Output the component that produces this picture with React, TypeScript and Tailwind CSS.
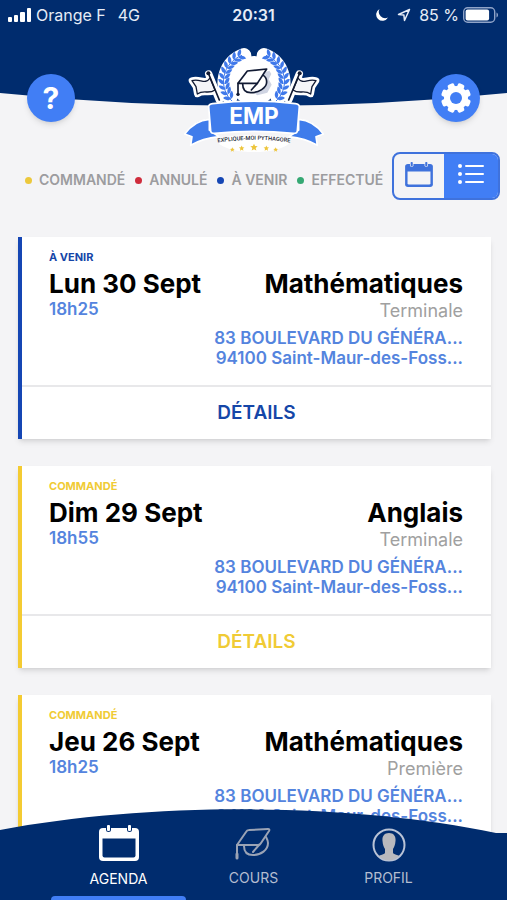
import React from "react";

type Status = "venir" | "commande";

const statusStyle: Record<Status, { label: string; border: string; text: string }> = {
  venir: { label: "À VENIR", border: "border-[#1546b4]", text: "text-[#1546a8]" },
  commande: { label: "COMMANDÉ", border: "border-[#f4cb32]", text: "text-[#f0cb35]" },
};

const lessons: { status: Status; date: string; time: string; subject: string; level: string }[] = [
  { status: "venir", date: "Lun 30 Sept", time: "18h25", subject: "Mathématiques", level: "Terminale" },
  { status: "commande", date: "Dim 29 Sept", time: "18h55", subject: "Anglais", level: "Terminale" },
  { status: "commande", date: "Jeu 26 Sept", time: "18h25", subject: "Mathématiques", level: "Première" },
];

const legend = [
  { label: "COMMANDÉ", dot: "bg-[#ecc83c]" },
  { label: "ANNULÉ", dot: "bg-[#cf2c3c]" },
  { label: "À VENIR", dot: "bg-[#1546b4]" },
  { label: "EFFECTUÉ", dot: "bg-[#35a873]" },
];

function StatusBar() {
  return (
    <div className="flex h-[30px] items-center justify-between px-2 text-base text-[#e6ecf7]">
      <div className="flex flex-1 items-center gap-1">
        <svg width="24" height="14" viewBox="0 0 24 14" fill="#fff" aria-hidden="true">
          <rect x="0" y="9" width="4" height="5" rx="1" />
          <rect x="6" y="7" width="4" height="7" rx="1" />
          <rect x="12" y="4" width="5" height="10" rx="1" />
          <rect x="19" y="0" width="4" height="14" rx="1" />
        </svg>
        <span>Orange F</span>
        <span className="ml-2">4G</span>
      </div>
      <span className="font-semibold">20:31</span>
      <div className="flex flex-1 items-center justify-end gap-1">
        <svg width="14" height="14" viewBox="0 0 14 14" fill="#fff" aria-hidden="true">
          <path d="M4.5 1A6.3 6.3 0 1 0 13 9.6 6.4 6.4 0 0 1 4.5 1Z" />
        </svg>
        <svg className="ml-1" width="14" height="14" viewBox="0 0 14 14" fill="none" stroke="#e6ecf7" strokeWidth="1.5" strokeLinejoin="round" aria-hidden="true">
          <path d="M12.5 1.5 1.5 6.5l5.4.6.6 5.4Z" />
        </svg>
        <span className="ml-1">85 %</span>
        <svg width="36" height="16" viewBox="0 0 36 16" aria-hidden="true">
          <rect x="0.7" y="0.7" width="31" height="14.6" rx="4" fill="none" stroke="#8fa3c8" strokeWidth="1.4" />
          <rect x="2.6" y="2.6" width="23.5" height="10.8" rx="2" fill="#fff" />
          <path d="M33.5 5.5c2 .8 2 4.2 0 5Z" fill="#8fa3c8" />
        </svg>
      </div>
    </div>
  );
}

const leafAngles = [140, 151, 162, 173, 184, 195, 206, 217, 228, 239];

function Branch() {
  return (
    <g>
      <path d="M168 174A90 86 0 0 1 210 46" fill="none" stroke="#fff" strokeWidth="44" strokeLinecap="round" />
      <path d="M177 186A88 84 0 0 1 204 46" fill="none" stroke="#3f78ea" strokeWidth="3" />
      {leafAngles.map((angle) => {
        const rad = (angle * Math.PI) / 180;
        const x = 238 + 87 * Math.cos(rad);
        const y = 122 + 84 * Math.sin(rad);
        return (
          <g key={angle} transform={`translate(${x} ${y}) rotate(${angle + 90})`} fill="#3f78ea">
            <path d="M0 0C-1-10 7-16 17-17 17-9 12-1 0 0Z" />
            <path d="M0 0C-1 10 7 16 17 17 17 9 12 1 0 0Z" />
          </g>
        );
      })}
    </g>
  );
}

function Flag() {
  const cloth = "M108 114C94 136 78 114 54 122L66 140 70 162C90 148 104 164 123 150Z";
  const pole = "M104 102 136 180";
  return (
    <g strokeLinecap="round" strokeLinejoin="round">
      <path d={cloth} fill="#fff" stroke="#fff" strokeWidth="20" />
      <path d={pole} fill="none" stroke="#fff" strokeWidth="22" />
      <path d={cloth} fill="#f4f5f8" stroke="#111a33" strokeWidth="4" />
      <path d={pole} fill="none" stroke="#111a33" strokeWidth="5" />
      <circle cx="103" cy="100" r="6" fill="#111a33" />
    </g>
  );
}

const star = "M0-11 3.2-4 11-3.4 5 1.8 7 9.5 0 5.4-7 9.5-5 1.8-11-3.4-3.2-4Z";

function Logo() {
  return (
    <svg width="144" height="108" viewBox="24 12 432 324" role="img" aria-label="Explique-moi Pythagore">
      <circle cx="240" cy="122" r="74" fill="#fff" />
      <Branch />
      <g transform="translate(480 0) scale(-1 1)">
        <Branch />
      </g>
      <Flag />
      <g transform="translate(480 0) scale(-1 1)">
        <Flag />
      </g>
      <path d="M262 100 286 92 292 102 284 118 293 134 280 158 250 166 236 156Z" fill="#cfd4e2" />
      <g fill="none" stroke="#111a33" strokeWidth="5" strokeLinejoin="round" strokeLinecap="round">
        <path d="M206 132C206 150 216 158 230 158 254 158 278 144 278 126 278 116 274 110 268 106" fill="#fff" />
        <path d="M192 130 220 93 278 87 250 130Z" fill="#fff" />
        <path d="M192 130V164M250 130 232 150" />
      </g>
      <circle cx="192" cy="163" r="5" fill="#111a33" />
      <g fill="#3f7ceb" stroke="#fff" strokeWidth="5" strokeLinejoin="round">
        <path d="M106 238C76 240 54 252 32 282L54 290 50 316C74 302 96 294 134 290L106 270Z" />
        <path d="M374 238C404 240 426 252 448 282L426 290 430 316C406 302 384 294 346 290L374 270Z" />
        <path d="M104 200C104 194 110 192 116 191 200 181 280 181 364 191 370 192 376 194 376 200L370 272C370 278 364 280 358 280 280 272 200 272 122 280 116 280 110 278 110 272Z" />
      </g>
      <text x="240" y="252" textAnchor="middle" fontSize="68" className="font-['Inter',sans-serif] font-bold" fill="#fff">EMP</text>
      <path id="motto" d="M110 311Q240 288 370 311" fill="none" />
      <path d="M134 294Q240 276 346 294L344 312Q310 336 240 336T136 312Z" fill="#fff" />
      <text fontSize="17" textAnchor="middle" className="font-['Roboto',sans-serif] font-medium" fill="#202635">
        <textPath href="#motto" startOffset="50%">EXPLIQUE-MOI PYTHAGORE</textPath>
      </text>
      <g fill="#edc53c">
        <path d={star} transform="translate(240 322)" />
        <path d={star} transform="translate(203 325) scale(.75)" />
        <path d={star} transform="translate(277 325) scale(.75)" />
        <path d={star} transform="translate(175 329) scale(.65)" />
        <path d={star} transform="translate(305 329) scale(.65)" />
      </g>
    </svg>
  );
}

function Gear() {
  return (
    <svg width="32" height="32" viewBox="-16 -16 32 32" aria-hidden="true">
      <g fill="#fff">
        <circle r="12" />
        {[22.5, 67.5, 112.5, 157.5].map((a) => (
          <rect key={a} x="-3.5" y="-15" width="7" height="30" rx="2" transform={`rotate(${a})`} />
        ))}
      </g>
      <circle r="6" fill="#417ef5" />
    </svg>
  );
}

function CalendarIcon({ className, hole }: { className: string; hole: string }) {
  return (
    <svg className={className} viewBox="0 0 40 36" aria-hidden="true">
      <rect x="0" y="3" width="40" height="33" rx="4" fill="currentColor" />
      <path d="M3.5 13.5h33v17a2 2 0 0 1-2 2h-29a2 2 0 0 1-2-2Z" fill={hole} />
      <rect x="7" y="-1" width="5" height="8" rx="2.5" fill={hole} />
      <rect x="28" y="-1" width="5" height="8" rx="2.5" fill={hole} />
      <rect x="8" y="0" width="3" height="6" rx="1" fill="currentColor" />
      <rect x="29" y="0" width="3" height="6" rx="1" fill="currentColor" />
    </svg>
  );
}

function CapIcon() {
  return (
    <svg width="38" height="32" viewBox="0 0 38 32" fill="none" stroke="currentColor" strokeWidth="2" strokeLinejoin="round" strokeLinecap="round" aria-hidden="true">
      <path d="M2 17 11 4Q12 2 14 2L33 1Q35 1 34 3L26 15Q25 17 23 17Z" />
      <path d="M2 17v12M9 18c0 6 3 9 9 9 8 0 15-5 15-12 0-3-1-4-2-6M24 17l-6 7" />
      <path d="M2 26v4" strokeWidth="3" />
    </svg>
  );
}

function ProfileIcon() {
  return (
    <svg width="34" height="34" viewBox="0 0 34 34" aria-hidden="true">
      <circle cx="17" cy="17" r="15.5" fill="none" stroke="#b9c3d6" strokeWidth="2" />
      <path d="M17 5c-5 0-7 3.5-6.5 8 .3 4 1.3 6 2.5 8v3.5c0 1-.5 1.3-2.5 2-2 .6-3 1-4 1.5a15 15 0 0 0 21 0c-1-.5-2-.9-4-1.5-2-.7-2.5-1-2.5-2V21c1.2-2 2.2-4 2.5-8 .5-4.5-1.5-8-6.5-8Z" fill="#b9b9bd" />
    </svg>
  );
}

function LessonCard({ lesson }: { lesson: (typeof lessons)[number] }) {
  const style = statusStyle[lesson.status];
  return (
    <article className={`shrink-0 border-l-4 bg-white shadow-md ${style.border}`}>
      <div className="flex justify-between pt-3 pr-7 pb-[17px] pl-[27px]">
        <div>
          <p className={`text-[11px] leading-4 font-bold ${style.text}`}>{style.label}</p>
          <h2 className="mt-1 text-[26px] leading-[30px] font-bold text-black">{lesson.date}</h2>
          <p className="text-[17px] leading-5 font-semibold text-[#5484de]">{lesson.time}</p>
        </div>
        <div className="pt-5 text-right">
          <h3 className="text-[26px] leading-[30px] font-bold text-black">{lesson.subject}</h3>
          <p className="text-lg leading-6 text-[#a0a0a0]">{lesson.level}</p>
          <address className="mt-[5px] text-[17px] leading-5 font-semibold text-[#5484de] not-italic">
            83 BOULEVARD DU GÉNÉRA...
            <br />
            94100 Saint-Maur-des-Foss...
          </address>
        </div>
      </div>
      <button className={`h-[54px] w-full border-t-2 border-[#e8e8ea] text-[19px] font-semibold ${style.text}`}>DÉTAILS</button>
    </article>
  );
}

export default function App() {
  return (
    <div className="relative flex h-screen flex-col overflow-hidden bg-[#f4f4f6] font-['Inter',sans-serif]">
      <header className="relative">
        <svg className="absolute inset-x-0 top-0 h-[106px] w-full" viewBox="0 0 507 106" preserveAspectRatio="none" aria-hidden="true">
          <path d="M0 0H507V93Q380 106 254 106T0 93Z" fill="#002c6e" />
        </svg>
        <div className="relative">
          <StatusBar />
          <div className="flex items-center justify-between px-[27px] pt-[14px]">
            <button aria-label="Aide" className="flex size-12 items-center justify-center rounded-full bg-[#417ef5] text-[30px] font-bold text-white shadow-md">?</button>
            <Logo />
            <button aria-label="Réglages" className="flex size-12 items-center justify-center rounded-full bg-[#417ef5] shadow-md">
              <Gear />
            </button>
          </div>
        </div>
      </header>

      <div className="flex items-center justify-between pr-[7px] pl-[25px]">
        <ul className="flex items-center gap-[10px] pt-2">
          {legend.map((item) => (
            <li key={item.label} className="flex items-center gap-[7px] text-sm font-semibold whitespace-nowrap text-[#9c9c9f]">
              <span className={`size-[7px] rounded-full ${item.dot}`} />
              {item.label}
            </li>
          ))}
        </ul>
        <div className="flex h-12 w-[108px] shrink-0 overflow-hidden rounded-lg border-2 border-[#3f72dc]">
          <button aria-label="Vue calendrier" className="flex w-[50px] items-center justify-center pb-1 text-[#3f72dc]">
            <CalendarIcon className="h-[25px] w-7" hole="#f4f4f6" />
          </button>
          <button aria-label="Vue liste" className="flex flex-1 items-center justify-center bg-[#417ef5] pb-1">
            <svg width="26" height="22" viewBox="0 0 26 22" fill="#fff" aria-hidden="true">
              <circle cx="2" cy="3" r="2" />
              <circle cx="2" cy="11" r="2" />
              <circle cx="2" cy="19" r="2" />
              <rect x="7" y="2" width="19" height="2" rx="1" />
              <rect x="7" y="10" width="19" height="2" rx="1" />
              <rect x="7" y="18" width="19" height="2" rx="1" />
            </svg>
          </button>
        </div>
      </div>

      <main className="flex min-h-0 flex-1 flex-col gap-[27px] overflow-hidden pt-[37px] pr-4 pl-[18px]">
        {lessons.map((lesson) => (
          <LessonCard key={lesson.date} lesson={lesson} />
        ))}
      </main>

      <nav className="absolute inset-x-0 bottom-0 h-[92px]">
        <svg className="absolute inset-0 h-full w-full" viewBox="0 0 507 92" preserveAspectRatio="none" aria-hidden="true">
          <path d="M0 22C150-6 350-6 496 25H507V92H0Z" fill="#002c6e" />
        </svg>
        <div className="relative grid h-full grid-cols-3 px-[51px] text-sm text-[#b4bdd0]">
          <a href="#agenda" className="flex flex-col items-center justify-end text-white">
            <CalendarIcon className="h-9 w-10" hole="#002c6e" />
            <span className="mt-2 leading-5">AGENDA</span>
            <span className="mt-[7px] h-1 w-full rounded-t-sm bg-[#417ef5]" />
          </a>
          <a href="#cours" className="flex flex-col items-center justify-end pb-3 text-[#9aa3b5]">
            <CapIcon />
            <span className="mt-2 leading-5 text-[#b4bdd0]">COURS</span>
          </a>
          <a href="#profil" className="flex flex-col items-center justify-end pb-3">
            <ProfileIcon />
            <span className="mt-1.5 leading-5">PROFIL</span>
          </a>
        </div>
      </nav>
    </div>
  );
}
